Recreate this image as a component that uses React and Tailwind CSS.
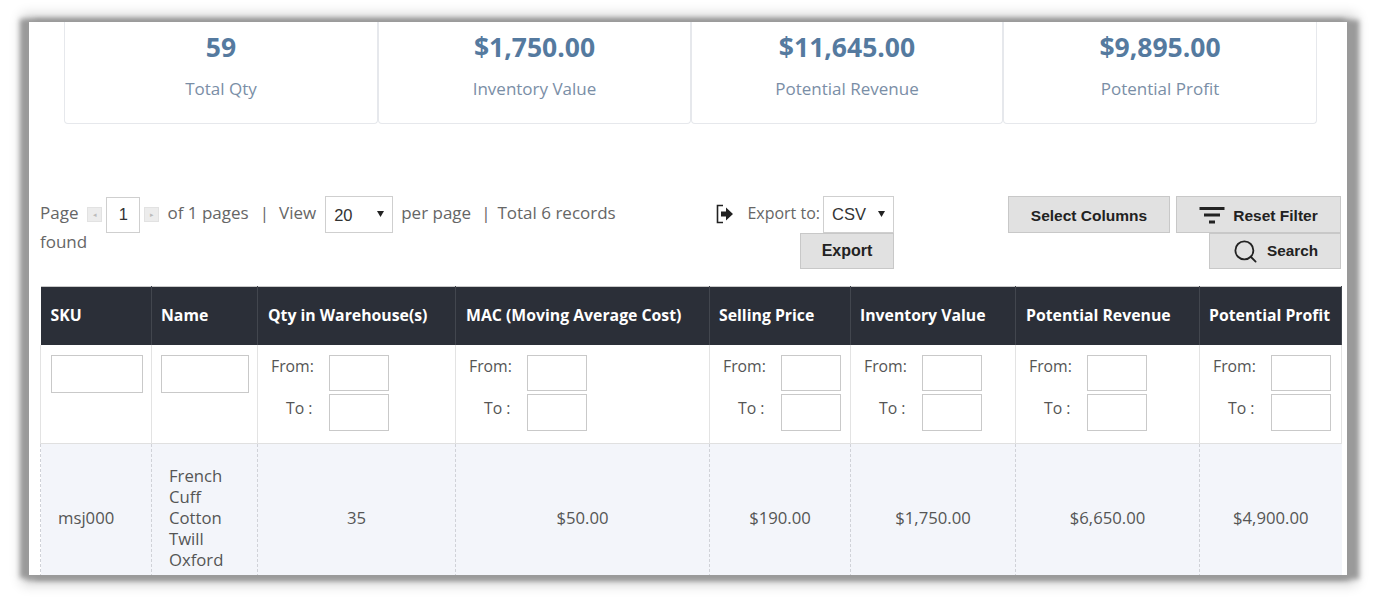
import React from "react";
import { Search } from "lucide-react";

const stats = [
  ["59", "Total Qty", "w-[314px]"],
  ["$1,750.00", "Inventory Value", "w-[313px]"],
  ["$11,645.00", "Potential Revenue", "w-[312px]"],
  ["$9,895.00", "Potential Profit", "w-[314px]"],
];
const cols = [
  ["SKU", "w-[111px]", "pl-[10px]"],
  ["Name", "w-[106px]", "pl-[9px]"],
  ["Qty in Warehouse(s)", "w-[198px]", "pl-[10px]"],
  ["MAC (Moving Average Cost)", "w-[254px]", "pl-[10px]"],
  ["Selling Price", "w-[141px]", "pl-[9px]"],
  ["Inventory Value", "w-[165px]", "pl-[9px]"],
  ["Potential Revenue", "w-[184px]", "pl-[10px]"],
  ["Potential Profit", "w-[142px]", "pl-[9px]"],
];
const values = ["35", "$50.00", "$190.00", "$1,750.00", "$6,650.00", "$4,900.00"];

function Btn({ className = "", children }) {
  return (
    <button className={"flex items-center justify-center bg-[#e1e1e1] border border-[#c8c8c8] font-['Liberation_Sans',Arial,sans-serif] font-bold text-[#222] text-[15.5px] " + className}>
      {children}
    </button>
  );
}

function Drop({ value, className, arrow }) {
  return (
    <div className={"relative " + className}>
      <select defaultValue={value} className="w-full h-full appearance-none bg-white border border-[#cfcfcf] pl-[8px] text-[16.5px] text-[#333] font-['Liberation_Sans',Arial,sans-serif] outline-none">
        <option>{value}</option>
      </select>
      <svg className={"absolute top-[15px] w-[7px] h-[6px] pointer-events-none " + arrow} viewBox="0 0 7 6">
        <path d="M0 0h7L3.5 6z" fill="#222" />
      </svg>
    </div>
  );
}

function RangeFilter() {
  return (
    <td className="border-r border-[#e3e3e3] pl-[13px] pr-0 pt-[10px] pb-[12px] align-top text-[15.8px]">
      <div className="flex flex-col gap-[3px]">
        <div className="flex items-start">
          <span className="w-[58px] shrink-0 text-left leading-[22px]">From:</span>
          <input className="w-[60px] h-[36px] border border-[#c9c9c9] bg-white" />
        </div>
        <div className="flex items-start">
          <span className="w-[58px] shrink-0 pl-[15px] text-left leading-[22px] pt-[3px]">To :</span>
          <input className="w-[60px] h-[37px] border border-[#c9c9c9] bg-white" />
        </div>
      </div>
    </td>
  );
}

export default function App() {
  return (
    <div className="w-[1376px] h-[597px] bg-white pt-[22px] pl-[29px] font-['Open_Sans',sans-serif] overflow-hidden">
      <div className="w-[1318px] h-[553px] bg-white overflow-hidden shadow-[-6px_0_5px_3px_#9a9a9a,9px_1px_5px_3px_#9a9a9a,0_2px_5px_3px_#a8a8a8,1px_1px_12px_8px_rgba(0,0,0,0.2)] pl-[11px] pr-[6px]">
        <div className="flex ml-[24px]">
          {stats.map(([v, l, w]) => (
            <div key={l} className={w + " h-[102px] border border-t-0 border-[#e6e8ec] rounded-b-[4px] text-center"}>
              <div className="text-[26.5px] font-bold leading-[33px] mt-[9px] text-[#557a9f]">{v}</div>
              <div className="text-[17px] leading-[20px] mt-[15px] text-[#7a8ea6]">{l}</div>
            </div>
          ))}
        </div>

        <div className="flex mt-[72px] h-[90px] text-[17px] text-[#666]">
          <div className="w-[640px] leading-[30px]">
            <div className="flex items-center h-[37px] whitespace-nowrap">
              <span className="pb-[4px]">Page</span>
              <span className="w-[15px] h-[15px] ml-[9px] bg-[#ececec] border border-[#e2e2e2] flex items-center justify-center text-[7px] text-[#bbb]">◂</span>
              <input defaultValue="1" className="w-[34px] h-[36px] ml-[4px] border border-[#cfcfcf] text-center text-[16.5px] text-[#333] font-['Liberation_Sans',Arial,sans-serif]" />
              <span className="w-[15px] h-[15px] ml-[4px] bg-[#ececec] border border-[#e2e2e2] flex items-center justify-center text-[7px] text-[#bbb]">▸</span>
              <span className="ml-[8px] pb-[4px]">of 1 pages</span>
              <span className="ml-[11px] pb-[4px]">|</span>
              <span className="ml-[10px] pb-[4px]">View</span>
              <Drop value="20" className="w-[68px] h-[37px] ml-[9px]" arrow="right-[9px]" />
              <span className="ml-[8px] pb-[4px]">per page</span>
              <span className="ml-[10px] pb-[4px]">|</span>
              <span className="ml-[7px] pb-[4px]">Total 6 records</span>
            </div>
            <div className="leading-[20px] mt-[-1px]">found</div>
          </div>

          <div className="w-[214px] flex flex-col items-end">
            <div className="flex items-center h-[37px] w-full">
              <svg className="ml-[35px] w-[20px] h-[22px] mb-[2px]" viewBox="0 0 20 22">
                <path d="M8 2.5H2.5v17H8" fill="none" stroke="#222" strokeWidth="1.6" />
                <path d="M6 8.5h5V4.5l7 6.5-7 6.5v-4H6z" fill="#222" />
              </svg>
              <span className="ml-auto text-[16px] text-[#666] whitespace-nowrap pb-[4px]">Export to:</span>
              <Drop value="CSV" className="w-[71px] h-[37px] ml-[3px]" arrow="right-[9px]" />
            </div>
            <Btn className="w-[94px] h-[36px] text-[16px]">Export</Btn>
          </div>

          <div className="flex-1 flex flex-col items-end">
            <div className="flex gap-[6px]">
              <Btn className="w-[162px] h-[37px] pt-[2px]">Select Columns</Btn>
              <Btn className="w-[165px] h-[37px] gap-[8px] pt-[2px]">
                <svg className="w-[26px] h-[17px]" viewBox="0 0 26 17">
                  <path d="M0.5 1.5h25M5 8h16M10 15h6" stroke="#222" strokeWidth="3" fill="none" />
                </svg>
                <span>Reset Filter</span>
              </Btn>
            </div>
            <Btn className="w-[132px] h-[36px] gap-[8px]">
              <Search size={27} strokeWidth={1.6} color="#222" />
              <span className="text-[15.3px]">Search</span>
            </Btn>
          </div>
        </div>

        <table className="table-fixed border-collapse w-[1301px] text-[15.8px] text-[#555]">
          <colgroup>
            {cols.map(([n, w]) => <col key={n} className={w} />)}
          </colgroup>
          <thead>
            <tr className="h-[58px] bg-[#2b2f38] text-white border-t border-[#c9c9c9]">
              {cols.map(([n, , p]) => (
                <th key={n} className={"text-left font-bold text-[15.8px] whitespace-nowrap border-r border-[#42464e] " + p}>{n}</th>
              ))}
            </tr>
          </thead>
          <tbody>
            <tr className="h-[99px] border-b border-[#e0e0e0]">
              <td className="border-l border-r border-[#e3e3e3] pl-[10px] pt-[10px] align-top">
                <input className="w-[92px] h-[38px] border border-[#c9c9c9] bg-white block" />
              </td>
              <td className="border-r border-[#e3e3e3] pl-[9px] pt-[10px] align-top">
                <input className="w-[88px] h-[38px] border border-[#c9c9c9] bg-white block" />
              </td>
              {[0, 1, 2, 3, 4, 5].map((i) => <RangeFilter key={i} />)}
            </tr>
            <tr className="h-[148px] bg-[#f3f5fa] text-[#555] text-[16.7px]">
              <td className="border-l border-r border-dashed border-[#d0d2d8] text-left pl-[17px]">msj000</td>
              <td className="border-r border-dashed border-[#d0d2d8] pl-[17px] pr-[17px] leading-[21px] text-left">French Cuff Cotton Twill Oxford</td>
              {values.map((v, i) => (
                <td key={i} className="border-r border-dashed border-[#d0d2d8] text-center last:border-r-0">{v}</td>
              ))}
            </tr>
          </tbody>
        </table>
      </div>
    </div>
  );
}
